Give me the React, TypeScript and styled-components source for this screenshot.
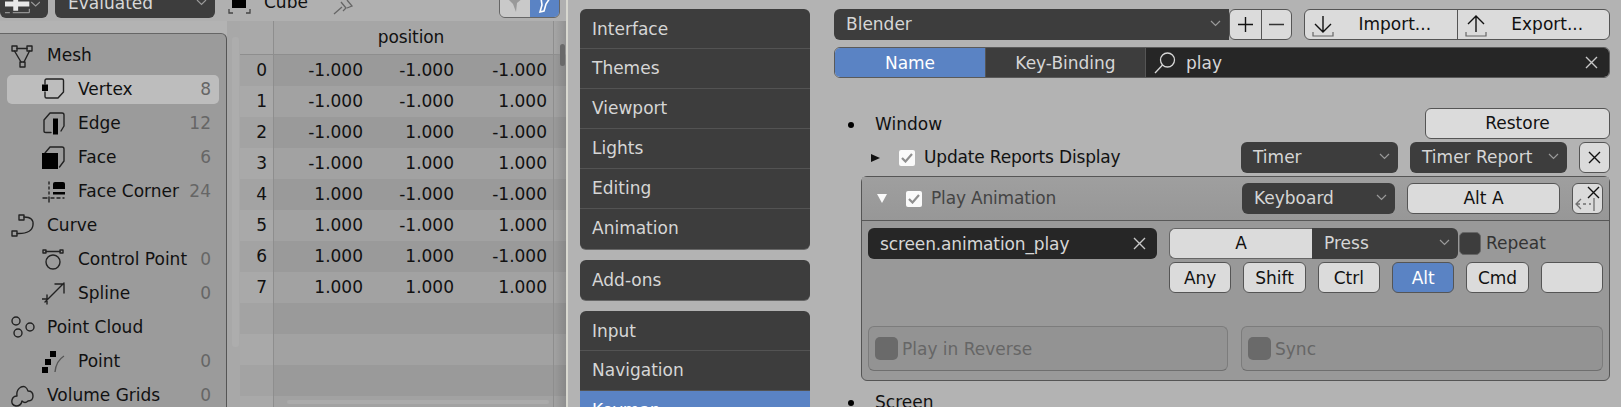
import React from 'react';
import styled, { createGlobalStyle } from 'styled-components';

const GlobalStyle = createGlobalStyle`
  html, body {
    margin: 0;
    padding: 0;
    background: #b3b3b3;
  }
  body {
    font-family: "DejaVu Sans", sans-serif;
    font-size: 17px;
    color: #111;
  }
`;

const Page = styled.div`
  display: flex;
  width: 1621px;
  height: 407px;
  overflow: hidden;
  background: #b3b3b3;
`;

/* ---------- left editor ---------- */

const Editor = styled.div`
  display: flex;
  flex-direction: column;
  width: 566px;
  flex: none;
`;

const TopBar = styled.div`
  display: flex;
  height: 21px;
  flex: none;
  padding-right: 6px;
  background: #b0b0b0;
  overflow: hidden;
`;

const TopDropdown = styled.div<{ $width: number; $gap: number; $pad: number }>`
  display: flex;
  align-items: center;
  justify-content: space-between;
  width: ${(p) => p.$width}px;
  height: 31px;
  margin: -13px 0 0 ${(p) => p.$gap}px;
  padding: 0 8px 0 ${(p) => p.$pad}px;
  box-sizing: border-box;
  flex: none;
  background: #3d3d3d;
  color: #d8d8d8;
  border-radius: 6px;
`;

const TopLabel = styled.span`
  height: 31px;
  line-height: 31px;
  margin: -13px 0 0 13px;
  width: 69px;
  flex: none;
`;

const TopIcon = styled.span<{ $gap: number }>`
  flex: none;
  height: 18px;
  margin-left: ${(p) => p.$gap}px;
  svg {
    display: block;
  }
`;

const Toggle = styled.div`
  display: flex;
  width: 61px;
  height: 31px;
  margin: -13px 0 0 auto;
  flex: none;
  border: 1px solid #666;
  border-radius: 6px;
  box-sizing: border-box;
  overflow: hidden;
`;

const ToggleHalf = styled.div<{ $on?: boolean }>`
  flex: 1;
  display: flex;
  align-items: flex-end;
  justify-content: center;
  padding-bottom: 3px;
  background: ${(p) => (p.$on ? '#5a83c4' : '#c9c9c9')};
`;

const EditorBody = styled.div`
  display: flex;
  flex: 1;
  min-height: 0;
`;

const Sidebar = styled.div`
  width: 227px;
  flex: none;
  margin-top: 12px;
  padding: 7px 7px 0;
  box-sizing: border-box;
  background: #9b9b9b;
  border-top: 1px solid #666;
  border-right: 1px solid #555;
  border-top-right-radius: 6px;
`;

const TreeRow = styled.div<{ $sub?: boolean; $active?: boolean }>`
  display: flex;
  align-items: center;
  height: 29px;
  margin-bottom: 5px;
  padding: 0 8px 0 ${(p) => (p.$sub ? 35 : 4)}px;
  border-radius: 5px;
  background: ${(p) => (p.$active ? '#bdbdbd' : 'transparent')};
  svg {
    flex: none;
    margin-right: 12px;
  }
`;

const TreeLabel = styled.span`
  flex: 1;
  white-space: nowrap;
  color: #111;
  padding-bottom: 2px;
`;

const TreeCount = styled.span`
  color: #666;
  padding-bottom: 2px;
`;

const Gutter = styled.div`
  width: 13px;
  flex: none;
  padding: 16px 1px 0 5px;
  box-sizing: border-box;
  background: #a8a8a8;
`;

const GutterThumb = styled.div`
  height: 310px;
  border-radius: 3px;
  background: #adadad;
`;

const Table = styled.div`
  position: relative;
  width: 326px;
  flex: none;
  overflow: hidden;
`;

const TableRow = styled.div<{ $header?: boolean; $dark?: boolean }>`
  display: grid;
  grid-template-columns: 34px 89px 91px 93px 19px;
  height: ${(p) => (p.$header ? 33 : 31)}px;
  line-height: 30px;
  background: ${(p) => (p.$header ? '#a6a6a6' : p.$dark ? '#9a9a9a' : '#a2a2a2')};
  border-bottom: ${(p) => (p.$header ? '1px solid #8e8e8e' : '0')};
  box-sizing: ${(p) => (p.$header ? 'content-box' : 'border-box')};
`;

const IndexCell = styled.div<{ $dark?: boolean }>`
  padding-right: 6px;
  text-align: right;
  color: #111;
  background: ${(p) => (p.$dark ? '#a3a3a3' : '#a9a9a9')};
  border-right: 1px solid #8e8e8e;
`;

const ValueCell = styled.div`
  text-align: right;
  color: #111;
`;

const HeaderTitle = styled.div`
  grid-column: 2 / 5;
  text-align: center;
  line-height: 32px;
  padding-left: 1px;
  color: #111;
  letter-spacing: -0.1px;
`;

const TableEdge = styled.div`
  border-left: 1px solid #8e8e8e;
  margin-left: 6px;
  background: linear-gradient(90deg, transparent, rgba(0, 0, 0, 0.12));
`;

const ScrollThumb = styled.div`
  position: absolute;
  top: 23px;
  right: 1px;
  width: 5px;
  height: 22px;
  border-radius: 3px;
  background: #6a6a6a;
`;

const HScroll = styled.div`
  position: absolute;
  left: 47px;
  bottom: 3px;
  width: 262px;
  height: 4px;
  border-radius: 2px;
  background: #ababab;
`;

const Divider = styled.div`
  width: 2px;
  flex: none;
  background: #d8d8d0;
`;

/* ---------- preferences nav ---------- */

const Nav = styled.div`
  display: flex;
  flex-direction: column;
  gap: 11px;
  width: 230px;
  flex: none;
  margin-left: 12px;
  padding-top: 9px;
`;

const NavGroup = styled.div`
  flex: none;
  background: #3d3d3d;
  border-radius: 6px;
  overflow: hidden;
  box-shadow: 0 1px 0 #666;
`;

const NavItem = styled.div<{ $active?: boolean }>`
  height: 40px;
  line-height: 39px;
  padding-left: 12px;
  box-sizing: border-box;
  color: ${(p) => (p.$active ? '#fff' : '#d6d6d6')};
  background: ${(p) => (p.$active ? '#5a83c4' : 'transparent')};
  border-bottom: 1px solid #535353;
  &:first-child {
    line-height: 41px;
  }
  &:last-child {
    border-bottom: 0;
  }
`;

/* ---------- keymap main ---------- */

const Main = styled.div`
  display: flex;
  flex-direction: column;
  width: 776px;
  flex: none;
  margin-left: 24px;
  padding-top: 9px;
`;

const Bar = styled.div`
  display: flex;
  height: 31px;
  flex: none;
`;

const Dropdown = styled.div<{ $width?: number; $flat?: boolean }>`
  display: flex;
  align-items: center;
  justify-content: space-between;
  width: ${(p) => (p.$width ? `${p.$width}px` : 'auto')};
  height: 31px;
  flex: none;
  box-sizing: border-box;
  padding: 0 8px 2px 12px;
  background: #3d3d3d;
  color: #d6d6d6;
  border-radius: ${(p) => (p.$flat ? '6px 0 0 6px' : '6px')};
  white-space: nowrap;
`;

const Joined = styled.div<{ $width: number; $gap?: number }>`
  display: flex;
  width: ${(p) => p.$width}px;
  margin-left: ${(p) => p.$gap ?? 0}px;
  height: 31px;
  flex: none;
  box-sizing: border-box;
  border: 1px solid #555;
  border-radius: 6px;
  overflow: hidden;
  background: #dbdbdb;
`;

const JoinedCell = styled.div<{ $grow?: boolean }>`
  display: flex;
  align-items: center;
  justify-content: center;
  flex: ${(p) => (p.$grow ? 1 : 'none')};
  position: relative;
  min-width: 0;
  color: #111;
  &:not(:last-child) {
    border-right: 1px solid #555;
  }
`;

const StepCell = styled(JoinedCell)`
  width: 31px;
`;

const FileCell = styled(JoinedCell)`
  padding: 0 0 2px 28px;
`;

const FileIcon = styled.span`
  position: absolute;
  left: 7px;
  top: 3px;
  line-height: 0;
`;

const ModeTab = styled.div<{ $active?: boolean; $width: number }>`
  display: flex;
  align-items: center;
  justify-content: center;
  width: ${(p) => p.$width}px;
  flex: none;
  height: 100%;
  box-sizing: border-box;
  color: ${(p) => (p.$active ? '#fff' : '#d6d6d6')};
  background: ${(p) => (p.$active ? '#5a83c4' : '#3d3d3d')};
  border-right: 1px solid #555;
`;

const SearchField = styled.div`
  flex: 1;
  display: flex;
  align-items: center;
  gap: 9px;
  padding: 0 10px 0 7px;
  background: #262626;
  color: #d6d6d6;
`;

const SearchText = styled.span`
  flex: 1;
`;

const SearchBar = styled(Joined)`
  margin-top: 7px;
  border-color: #5a5a5a;
`;

const WindowRow = styled.div`
  display: flex;
  align-items: center;
  justify-content: space-between;
  height: 31px;
  flex: none;
  margin-top: 30px;
`;

const Bullet = styled.span`
  display: inline-block;
  width: 6px;
  height: 6px;
  margin: 0 21px 0 14px;
  border-radius: 50%;
  background: #000;
  vertical-align: 2px;
`;

const PlainButton = styled.div<{ $width?: number; $active?: boolean }>`
  display: flex;
  align-items: center;
  justify-content: center;
  width: ${(p) => (p.$width ? `${p.$width}px` : 'auto')};
  height: 31px;
  flex: none;
  box-sizing: border-box;
  padding-bottom: 2px;
  border: 1px solid #555;
  border-radius: 6px;
  color: ${(p) => (p.$active ? '#fff' : '#111')};
  background: ${(p) => (p.$active ? '#5a83c4' : '#dbdbdb')};
  position: relative;
`;

const ModButton = styled(PlainButton)`
  padding-bottom: 0;
`;

const IconButton = styled(PlainButton)`
  padding-bottom: 0;
`;

const ItemRow = styled.div`
  display: flex;
  align-items: center;
  height: 31px;
  flex: none;
  margin-top: 3px;
  padding-left: 37px;
`;

const Check = styled.span`
  display: flex;
  width: 16px;
  height: 16px;
  flex: none;
  border-radius: 2px;
  background: #fafafa;
  align-items: center;
  justify-content: center;
`;

const ItemLabel = styled.span<{ $muted?: boolean }>`
  flex: 1;
  margin-left: 9px;
  padding-bottom: 2px;
  white-space: nowrap;
  letter-spacing: -0.17px;
  color: ${(p) => (p.$muted ? '#444' : '#111')};
`;

const Controls = styled.div`
  display: flex;
  align-items: center;
  gap: 12px;
`;

const Panel = styled.div`
  height: 205px;
  flex: none;
  margin: 3px 0 0 27px;
  box-sizing: border-box;
  border: 1px solid #555;
  border-radius: 6px;
  background: #999;
`;

const PanelHead = styled.div`
  display: flex;
  align-items: center;
  height: 44px;
  box-sizing: border-box;
  padding: 0 6px 0 15px;
  border-bottom: 1px solid #585858;
  background: linear-gradient(#9f9f9f, #979797);
`;

const Triangle = styled.span<{ $down?: boolean; $white?: boolean }>`
  width: 0;
  height: 0;
  flex: none;
  ${(p) =>
    p.$down
      ? `border-left: 5px solid transparent; border-right: 5px solid transparent; border-top: 9px solid ${p.$white ? '#fafafa' : '#111'};`
      : `border-top: 4.5px solid transparent; border-bottom: 4.5px solid transparent; border-left: 9px solid ${p.$white ? '#fafafa' : '#111'};`}
  margin-right: ${(p) => (p.$down ? 19 : 19)}px;
`;

const PanelBody = styled.div`
  padding: 7px 6px 0;
`;

const PropGrid = styled.div`
  display: grid;
  grid-template-columns: 289px 434px;
  column-gap: 12px;
`;

const OperatorField = styled.div`
  display: flex;
  align-items: center;
  justify-content: space-between;
  height: 31px;
  padding: 0 10px 0 12px;
  box-sizing: border-box;
  border-radius: 6px;
  background: #262626;
  color: #d6d6d6;
  letter-spacing: -0.12px;
`;

const KeyColumn = styled.div`
  display: flex;
  flex-direction: column;
  gap: 3px;
`;

const KeyRow = styled.div`
  display: flex;
  align-items: center;
  height: 31px;
`;

const KeyCap = styled.div`
  display: flex;
  align-items: center;
  justify-content: center;
  width: 143px;
  height: 31px;
  flex: none;
  box-sizing: border-box;
  padding-bottom: 2px;
  border: 1px solid #666;
  border-right: 0;
  border-radius: 6px 0 0 6px;
  background: #dbdbdb;
  color: #111;
`;

const PressDropdown = styled(Dropdown)`
  border-radius: 0 6px 6px 0;
`;

const RepeatBox = styled.span`
  width: 22px;
  height: 23px;
  flex: none;
  margin: 0 5px 0 1px;
  box-sizing: border-box;
  border: 1px solid #666;
  border-radius: 5px;
  background: #3d3d3d;
`;

const RepeatLabel = styled.span`
  color: #333;
  padding-bottom: 2px;
`;

const ModGrid = styled.div`
  display: grid;
  grid-template-columns: repeat(6, 1fr);
  column-gap: 12px;
`;

const OptionGrid = styled.div`
  display: grid;
  grid-template-columns: 360px 362px;
  column-gap: 13px;
  margin-top: 33px;
`;

const OptionBox = styled.div`
  display: flex;
  align-items: center;
  height: 45px;
  padding-left: 6px;
  box-sizing: border-box;
  border: 1px solid #7c7c7c;
  border-bottom-color: #6f6f6f;
  border-radius: 6px;
  background: #939393;
  color: #666;
`;

const OptionCheck = styled.span`
  width: 23px;
  height: 23px;
  margin-right: 4px;
  flex: none;
  border-radius: 5px;
  background: #6a6a6a;
`;

const ScreenRow = styled.div`
  height: 31px;
  flex: none;
  line-height: 31px;
  margin-top: 6px;
  white-space: nowrap;
`;

/* ---------- icons ---------- */

const ink = { fill: 'none', stroke: '#222', strokeWidth: 1.4, strokeLinecap: 'round', strokeLinejoin: 'round' } as const;

const Ico = ({ children }: { children: React.ReactNode }) => (
  <svg width="24" height="24" viewBox="0 0 24 24">
    {children}
  </svg>
);

const MeshIcon = () => (
  <Ico>
    <g {...ink}>
      <rect x="1" y="2" width="5" height="5" />
      <rect x="16" y="2" width="5" height="5" />
      <rect x="9" y="18" width="5" height="5" />
      <path d="M6 4.5H16M3.5 7 10 18M18.5 7 13 18" />
    </g>
  </Ico>
);

const VertexIcon = () => (
  <Ico>
    <path {...ink} d="M3 6V2.500Q3 1 4.500 1H20Q21.500 1 21.500 2.500V14L16 20H4.500Q3 20 3 18.500V14" />
    <rect x="0" y="6.500" width="6" height="6.500" fill="#000" />
  </Ico>
);

const EdgeIcon = () => (
  <Ico>
    <path {...ink} d="M2 8 8 1H20Q22 1 22 3V14L19 19M9 20.500H4Q2 20.500 2 19V8" />
    <rect x="11" y="6.500" width="5" height="16" fill="#000" />
  </Ico>
);

const FaceIcon = () => (
  <Ico>
    <path {...ink} d="M3 7 8 1H20Q22 1 22 3V15L17.500 21" />
    <rect x="0" y="7" width="16" height="16" fill="#000" />
  </Ico>
);

const CornerIcon = () => (
  <Ico>
    <path {...ink} d="M7 2V4M7 7V9M7 12V14M7 17V22M1 18H5M9 18H12M15 18H18M21 18H22" />
    <path d="M11 4Q11 2 13 2H21Q23 2 23 4V9H11Z" fill="#000" />
    <rect x="11" y="12" width="12" height="2.500" fill="#000" />
  </Ico>
);

const CurveIcon = () => (
  <Ico>
    <g {...ink}>
      <rect x="8" y="1" width="5" height="5" />
      <rect x="1" y="17" width="5" height="5" />
      <path d="M13 3Q23 3 22 11Q21 20 6 19.500" />
    </g>
  </Ico>
);

const ControlIcon = () => (
  <Ico>
    <g {...ink}>
      <circle cx="11" cy="14" r="7" />
      <rect x="1" y="2" width="3" height="3" />
      <rect x="18" y="2" width="3" height="3" />
      <path d="M4 3.500H18" />
    </g>
  </Ico>
);

const SplineIcon = () => (
  <Ico>
    <path {...ink} d="M0 17H6M5 22V13M3 20 22 1M13 2H22V11" />
  </Ico>
);

const CloudIcon = () => (
  <Ico>
    <g {...ink}>
      <circle cx="5" cy="5" r="4" />
      <circle cx="19" cy="11" r="4" />
      <circle cx="7" cy="17" r="4" />
    </g>
  </Ico>
);

const PointIcon = () => (
  <Ico>
    <rect x="8" y="1" width="6" height="6" fill="#000" />
    <rect x="3" y="9" width="6" height="6" fill="#000" />
    <rect x="0" y="17" width="6" height="6" fill="#000" />
    <path d="M13 22Q14 11 22 6" fill="none" stroke="#555" strokeWidth="1.4" />
  </Ico>
);

const VolumeIcon = () => (
  <Ico>
    <path {...ink} d="M5 22Q0 21 1 16Q2 12 6 12Q5 6 10 3Q15 1 17 7Q22 7 22 12Q22 17 17 17Q14 20 11 17Q10 22 5 22Z" />
  </Ico>
);

const Chevron = ({ color = '#9a9a9a' }: { color?: string }) => (
  <svg width="11" height="7" viewBox="0 0 11 7">
    <path d="M1 1 5.500 5.500 10 1" fill="none" stroke={color} strokeWidth="1.2" />
  </svg>
);

const CloseX = ({ color = '#111', size = 15 }: { color?: string; size?: number }) => (
  <svg width={size} height={size} viewBox="0 0 15 15">
    <path d="M2 2 13 13M13 2 2 13" fill="none" stroke={color} strokeWidth="1.4" />
  </svg>
);

const TickMark = () => (
  <svg width="12" height="10" viewBox="0 0 12 10">
    <path d="M1 5 4.500 8.500 11 1" fill="none" stroke="#8f8f8f" strokeWidth="2.200" />
  </svg>
);

const ImportIcon = () => (
  <svg width="22" height="24" viewBox="0 0 22 24">
    <path d="M11 3V19M3 11 11 19 19 11" fill="none" stroke="#111" strokeWidth="1.4" />
    <path d="M1 19V23H21V19" fill="none" stroke="#666" strokeWidth="1.2" />
  </svg>
);

const ExportIcon = () => (
  <svg width="22" height="24" viewBox="0 0 22 24">
    <path d="M11 19V3M3 11 11 3 19 11" fill="none" stroke="#111" strokeWidth="1.4" />
    <path d="M1 19V23H21V19" fill="none" stroke="#666" strokeWidth="1.2" />
  </svg>
);

const SearchIcon = () => (
  <svg width="24" height="24" viewBox="0 0 24 24">
    <circle cx="14.500" cy="9" r="7" fill="none" stroke="#d6d6d6" strokeWidth="1.3" />
    <path d="M9.500 14 2 22" fill="none" stroke="#d6d6d6" strokeWidth="1.3" />
  </svg>
);

const RevertIcon = () => (
  <svg width="29" height="29" viewBox="0 0 29 29">
    <path d="M3 20H7M10 20H13M16 20H18M8 15 3 20 8 25M21 14V27" fill="none" stroke="#707070" strokeWidth="1.3" />
    <path d="M15 3 26 14M26 3 15 14" fill="none" stroke="#111" strokeWidth="1.4" />
  </svg>
);

const ModeIcon = () => (
  <svg width="36" height="31" viewBox="0 0 36 31">
    <path d="M0 17H25M11 10V24" fill="none" stroke="#e8e8e8" strokeWidth="5" />
    <path d="M0 26H5M8 26H25M25 22V26" fill="none" stroke="#aaa" strokeWidth="1" />
    <path d="M27 15 31.500 19 36 15" fill="none" stroke="#9a9a9a" strokeWidth="1.2" />
  </svg>
);

const CubeIcon = () => (
  <svg width="23" height="18" viewBox="0 0 23 18">
    <rect x="4" y="0" width="14" height="8" fill="#000" />
    <path d="M1 9V13H5M22 9V13H18" fill="none" stroke="#444" strokeWidth="1.3" />
  </svg>
);

const PinIcon = () => (
  <svg width="22" height="18" viewBox="0 0 22 18">
    <path d="M1 14 9 7M8 2 13 8 10 11M14 0 19 6 14 8" fill="none" stroke="#666" strokeWidth="1.3" />
  </svg>
);

const ToggleLeftGlyph = () => (
  <svg width="20" height="16" viewBox="0 0 20 16">
    <path d="M2 0H18L12 5 11 14 8 6Z" fill="#999" />
  </svg>
);

const ToggleRightGlyph = () => (
  <svg width="14" height="16" viewBox="0 0 14 16">
    <path d="M4 0H13L9 6 7 13 3 14 5 7Z" fill="none" stroke="#fff" strokeWidth="1.6" />
  </svg>
);

/* ---------- data ---------- */

const tree: { label: string; count?: number; sub?: boolean; active?: boolean; icon: React.ReactNode }[] = [
  { label: 'Mesh', icon: <MeshIcon /> },
  { label: 'Vertex', count: 8, sub: true, active: true, icon: <VertexIcon /> },
  { label: 'Edge', count: 12, sub: true, icon: <EdgeIcon /> },
  { label: 'Face', count: 6, sub: true, icon: <FaceIcon /> },
  { label: 'Face Corner', count: 24, sub: true, icon: <CornerIcon /> },
  { label: 'Curve', icon: <CurveIcon /> },
  { label: 'Control Point', count: 0, sub: true, icon: <ControlIcon /> },
  { label: 'Spline', count: 0, sub: true, icon: <SplineIcon /> },
  { label: 'Point Cloud', icon: <CloudIcon /> },
  { label: 'Point', count: 0, sub: true, icon: <PointIcon /> },
  { label: 'Volume Grids', count: 0, icon: <VolumeIcon /> },
];

const vertices = [
  ['-1.000', '-1.000', '-1.000'],
  ['-1.000', '-1.000', '1.000'],
  ['-1.000', '1.000', '-1.000'],
  ['-1.000', '1.000', '1.000'],
  ['1.000', '-1.000', '-1.000'],
  ['1.000', '-1.000', '1.000'],
  ['1.000', '1.000', '-1.000'],
  ['1.000', '1.000', '1.000'],
];

const navGroups = [
  ['Interface', 'Themes', 'Viewport', 'Lights', 'Editing', 'Animation'],
  ['Add-ons'],
  ['Input', 'Navigation', 'Keymap'],
];

const mods = ['Any', 'Shift', 'Ctrl', 'Alt', 'Cmd', ''];

export default function App() {
  return (
    <Page>
      <GlobalStyle />
      <Editor>
        <TopBar>
          <TopDropdown $width={48} $gap={0} $pad={5}>
            <ModeIcon />
          </TopDropdown>
          <TopDropdown $width={160} $gap={7} $pad={13}>
            Evaluated
            <Chevron />
          </TopDropdown>
          <TopIcon $gap={13}>
            <CubeIcon />
          </TopIcon>
          <TopLabel>Cube</TopLabel>
          <TopIcon $gap={0}>
            <PinIcon />
          </TopIcon>
          <Toggle>
            <ToggleHalf>
              <ToggleLeftGlyph />
            </ToggleHalf>
            <ToggleHalf $on>
              <ToggleRightGlyph />
            </ToggleHalf>
          </Toggle>
        </TopBar>
        <EditorBody>
          <Sidebar>
            {tree.map((row) => (
              <TreeRow key={row.label} $sub={row.sub} $active={row.active}>
                {row.icon}
                <TreeLabel>{row.label}</TreeLabel>
                {row.count !== undefined && <TreeCount>{row.count}</TreeCount>}
              </TreeRow>
            ))}
          </Sidebar>
          <Gutter>
            <GutterThumb />
          </Gutter>
          <Table>
            <TableRow $header>
              <IndexCell />
              <HeaderTitle>position</HeaderTitle>
              <TableEdge />
            </TableRow>
            {Array.from({ length: 12 }, (_, i) => (
              <TableRow key={i} $dark={i % 2 === 0}>
                <IndexCell $dark={i % 2 === 0}>{i < 8 ? i : ''}</IndexCell>
                {[0, 1, 2].map((c) => (
                  <ValueCell key={c}>{i < 8 ? vertices[i][c] : ''}</ValueCell>
                ))}
                <TableEdge />
              </TableRow>
            ))}
            <ScrollThumb />
            <HScroll />
          </Table>
        </EditorBody>
      </Editor>
      <Divider />

      <Nav>
        {navGroups.map((group) => (
          <NavGroup key={group[0]}>
            {group.map((item) => (
              <NavItem key={item} $active={item === 'Keymap'}>
                {item}
              </NavItem>
            ))}
          </NavGroup>
        ))}
      </Nav>

      <Main>
        <Bar>
          <Dropdown $width={395} $flat>
            Blender
            <Chevron />
          </Dropdown>
          <Joined $width={63}>
            <StepCell>
              <svg width="15" height="15" viewBox="0 0 15 15">
                <path d="M7.500 0V15M0 7.500H15" stroke="#111" strokeWidth="1.4" />
              </svg>
            </StepCell>
            <StepCell $grow>
              <svg width="15" height="15" viewBox="0 0 15 15">
                <path d="M0 7.500H15" stroke="#333" strokeWidth="1.4" />
              </svg>
            </StepCell>
          </Joined>
          <Joined $width={306} $gap={12}>
            <FileCell $grow>
              <FileIcon>
                <ImportIcon />
              </FileIcon>
              Import...
            </FileCell>
            <FileCell $grow>
              <FileIcon>
                <ExportIcon />
              </FileIcon>
              Export...
            </FileCell>
          </Joined>
        </Bar>

        <SearchBar $width={776}>
          <ModeTab $active $width={151}>
            Name
          </ModeTab>
          <ModeTab $width={160}>Key-Binding</ModeTab>
          <SearchField>
            <SearchIcon />
            <SearchText>play</SearchText>
            <CloseX color="#c8c8c8" />
          </SearchField>
        </SearchBar>

        <WindowRow>
          <span>
            <Bullet />
            Window
          </span>
          <PlainButton $width={185}>Restore</PlainButton>
        </WindowRow>

        <ItemRow>
          <Triangle />
          <Check>
            <TickMark />
          </Check>
          <ItemLabel>Update Reports Display</ItemLabel>
          <Controls>
            <Dropdown $width={157}>
              Timer
              <Chevron />
            </Dropdown>
            <Dropdown $width={157}>
              Timer Report
              <Chevron />
            </Dropdown>
            <IconButton $width={31}>
              <CloseX />
            </IconButton>
          </Controls>
        </ItemRow>

        <Panel>
          <PanelHead>
            <Triangle $down $white />
            <Check>
              <TickMark />
            </Check>
            <ItemLabel $muted>Play Animation</ItemLabel>
            <Controls>
              <Dropdown $width={153}>
                Keyboard
                <Chevron />
              </Dropdown>
              <PlainButton $width={153}>Alt A</PlainButton>
              <IconButton $width={31}>
                <RevertIcon />
              </IconButton>
            </Controls>
          </PanelHead>
          <PanelBody>
            <PropGrid>
              <OperatorField>
                screen.animation_play
                <CloseX color="#c8c8c8" />
              </OperatorField>
              <KeyColumn>
                <KeyRow>
                  <KeyCap>A</KeyCap>
                  <PressDropdown $width={146}>
                    Press
                    <Chevron />
                  </PressDropdown>
                  <RepeatBox />
                  <RepeatLabel>Repeat</RepeatLabel>
                </KeyRow>
                <ModGrid>
                  {mods.map((mod) => (
                    <ModButton key={mod || 'blank'} $active={mod === 'Alt'}>
                      {mod}
                    </ModButton>
                  ))}
                </ModGrid>
              </KeyColumn>
            </PropGrid>
            <OptionGrid>
              <OptionBox>
                <OptionCheck />
                Play in Reverse
              </OptionBox>
              <OptionBox>
                <OptionCheck />
                Sync
              </OptionBox>
            </OptionGrid>
          </PanelBody>
        </Panel>

        <ScreenRow>
          <Bullet />
          Screen
        </ScreenRow>
      </Main>
    </Page>
  );
}
